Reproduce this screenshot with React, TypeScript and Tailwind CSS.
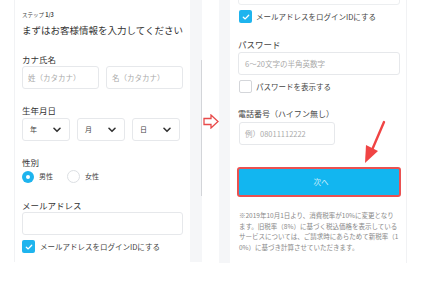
import React from "react";

const font = { fontFamily: '"Noto Sans CJK JP", "Noto Sans", sans-serif' };

function Check({ checked }: { checked: boolean }) {
  if (!checked)
    return <div className="w-[13px] h-[13px] rounded-[2px] border border-[#d4d6da] bg-white shrink-0" />;
  return (
    <div className="w-[13px] h-[13px] rounded-[2px] bg-[#1eb4ee] flex items-center justify-center shrink-0">
      <svg width="8" height="8" viewBox="0 0 8 8">
        <path d="M1.3 4.2 L3.2 5.9 L6.7 2.2" stroke="white" strokeWidth="1.3" fill="none" strokeLinecap="round" strokeLinejoin="round" />
      </svg>
    </div>
  );
}

function Chevron() {
  return (
    <svg width="8" height="6" viewBox="0 0 8 6">
      <path d="M1 1.3 L4 4.3 L7 1.3" stroke="#333" strokeWidth="1.6" fill="none" strokeLinecap="round" strokeLinejoin="round" />
    </svg>
  );
}

function Select({ label }: { label: string }) {
  return (
    <div className="w-[48px] h-[23px] border border-[#e6e8eb] rounded-[3px] bg-white flex items-center justify-between pl-[7px] pr-[8px]">
      <span className="text-[7px] text-[#444]">{label}</span>
      <Chevron />
    </div>
  );
}

export default function App() {
  return (
    <div className="w-[430px] h-[302px] bg-white relative overflow-hidden text-[#333]" style={font}>
      <div className="flex h-[262px]">
        {/* left page */}
        <div className="w-[14px]" />
        <div className="w-[176px] h-[262px] bg-white border-l border-[#f1f2f4] pl-[7px] pr-[7px] flex flex-col">
          <div className="mt-[11px] h-[8px] text-[5.5px] leading-[8px] text-[#444]">
            ステップ <span className="font-bold">1/3</span>
          </div>
          <div className="mt-[3px] h-[16px] text-[9.5px] leading-[16px] whitespace-nowrap">
            まずはお客様情報を入力してください
          </div>
          <div className="mt-[14px] h-[14px] text-[8.5px] leading-[14px]">カナ氏名</div>
          <div className="mt-[0px] flex gap-[7px]">
            <div className="w-[77px] h-[23px] border border-[#e6e8eb] rounded-[3px] flex items-center pl-[5px] text-[7.5px] text-[#aaa]">
              姓（カタカナ）
            </div>
            <div className="w-[77px] h-[23px] border border-[#e6e8eb] rounded-[3px] flex items-center pl-[5px] text-[7.5px] text-[#aaa]">
              名（カタカナ）
            </div>
          </div>
          <div className="mt-[14px] h-[14px] text-[8.5px] leading-[14px]">生年月日</div>
          <div className="mt-[1px] flex gap-[7px]">
            <Select label="年" />
            <Select label="月" />
            <Select label="日" />
          </div>
          <div className="mt-[14px] h-[14px] text-[8.5px] leading-[14px]">性別</div>
          <div className="mt-[1px] flex items-center h-[13px]">
            <div className="w-[12px] h-[12px] rounded-full bg-[#1eb4ee] flex items-center justify-center">
              <div className="w-[4px] h-[4px] rounded-full bg-white" />
            </div>
            <span className="ml-[5px] text-[7px] text-[#444]">男性</span>
            <div className="ml-[14px] w-[13px] h-[13px] rounded-full border border-[#dcdfe3] bg-white" />
            <span className="ml-[5px] text-[7px] text-[#444]">女性</span>
          </div>
          <div className="mt-[15px] h-[14px] text-[8.5px] leading-[14px]">メールアドレス</div>
          <div className="mt-[0px] w-[161px] h-[23px] border border-[#e6e8eb] rounded-[3px]" />
          <div className="mt-[5px] flex items-center">
            <Check checked />
            <span className="ml-[5px] text-[7.5px] text-[#444] whitespace-nowrap">メールアドレスをログインIDにする</span>
          </div>
        </div>
        {/* left gray strip with scrollbar */}
        <div className="w-[12px] h-[262px] bg-[#f5f6f8] relative">
          <div className="absolute right-0 top-[60px] w-[1.5px] h-[136px] bg-[#d3d5d9]" />
        </div>
        {/* gap with arrow */}
        <div className="w-[17px] h-[262px] bg-white flex items-start justify-center pt-[114px]">
          <svg width="16" height="15" viewBox="0 0 16 15">
            <path d="M1 4.5 H8 V1 L15 7.5 L8 14 V10.5 H1 Z" fill="white" stroke="#e84a4a" strokeWidth="1.3" strokeLinejoin="miter" />
          </svg>
        </div>
        {/* right gray strip */}
        <div className="w-[11px] h-[263px] bg-[#f5f6f8]" />
        {/* right page */}
        <div className="w-[177px] h-[263px] bg-white border-r border-[#f1f2f4] pl-[8px] flex flex-col">
          <div className="mt-[-20px] w-[162px] h-[25px] border border-[#eceef0] rounded-[3px]" />
          <div className="mt-[5px] flex items-center">
            <div className="ml-[1px]"><Check checked /></div>
            <span className="ml-[4px] text-[7.5px] text-[#444] whitespace-nowrap">メールアドレスをログインIDにする</span>
          </div>
          <div className="mt-[14px] h-[14px] text-[8.5px] leading-[14px] text-[#444]">パスワード</div>
          <div className="mt-[1px] w-[162px] h-[23px] border border-[#e6e8eb] rounded-[3px] flex items-center pl-[6px] text-[7.5px] text-[#aaa]">
            6～20文字の半角英数字
          </div>
          <div className="mt-[5px] flex items-center">
            <div className="ml-[1px]"><Check checked={false} /></div>
            <span className="ml-[4px] text-[7.5px] text-[#444] whitespace-nowrap">パスワードを表示する</span>
          </div>
          <div className="mt-[14px] h-[14px] text-[8px] leading-[14px] text-[#444]">電話番号（ハイフン無し）</div>
          <div className="mt-[1px] ml-[1px] w-[96px] h-[23px] border border-[#e6e8eb] rounded-[3px] flex items-center pl-[5px] text-[7.5px] text-[#aaa]">
            例）08011112222
          </div>
          <div className="mt-[22px] ml-[-1px] w-[164px] h-[30px] rounded-[3px] border-2 border-[#ea5151] bg-[#12b6f0] flex items-center justify-center text-[7.5px] text-[#cdeefc] pl-[4px]">
            次へ
          </div>
          <div className="mt-[13px] ml-[1px] text-[6.5px] leading-[10.7px] text-[#888] whitespace-nowrap">
            <div>※2019年10月1日より、消費税率が10%に変更となり</div>
            <div>ます。旧税率（8%）に基づく税込価格を表示している</div>
            <div>サービスについては、ご請求時にあらためて新税率（1</div>
            <div>0%）に基づき計算させていただきます。</div>
          </div>
        </div>
      </div>
      {/* red pointer arrow */}
      <svg className="absolute left-[355px] top-[118px]" width="40" height="48" viewBox="0 0 40 48">
        <path d="M29 4 L17 32" stroke="#f04444" strokeWidth="2.4" strokeLinecap="round" />
        <path d="M10 45 L11 27 L23 33 Z" fill="#f04444" />
      </svg>
    </div>
  );
}
